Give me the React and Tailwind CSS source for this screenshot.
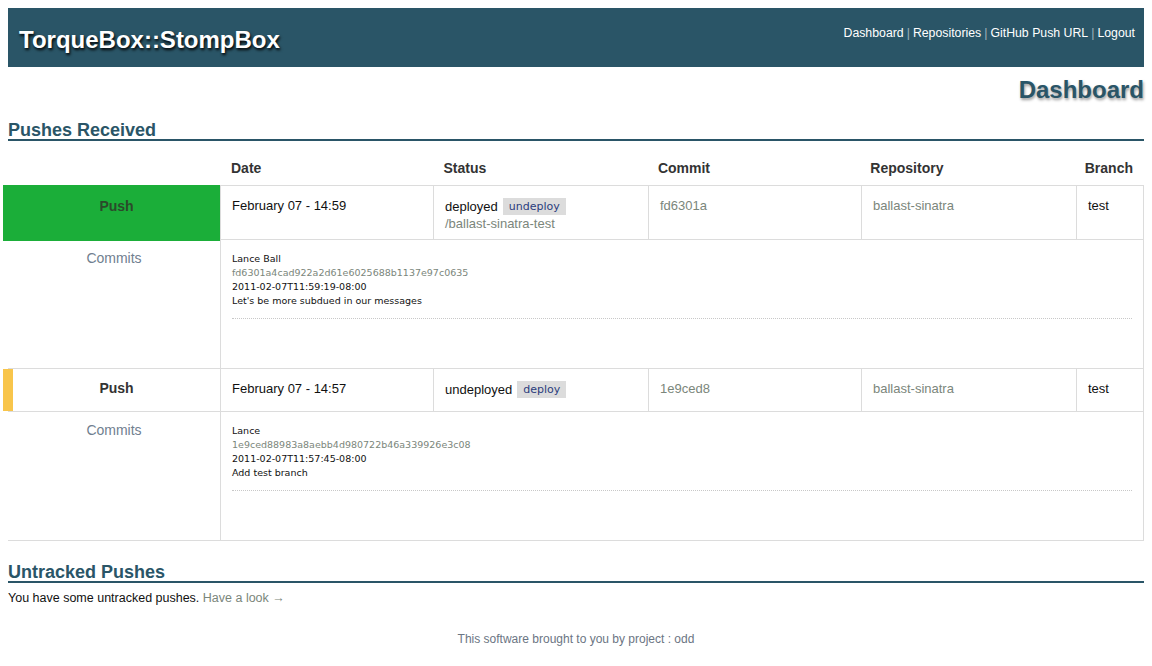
import React from 'react';

const BLUE = '#2a5567';
const LINK = 'text-[#7b867b]';

const pushes = [
  {
    id: 1,
    color: 'green',
    date: 'February 07 - 14:59',
    status: 'deployed',
    action: 'undeploy',
    path: '/ballast-sinatra-test',
    commit: 'fd6301a',
    repo: 'ballast-sinatra',
    branch: 'test',
    author: 'Lance Ball',
    sha: 'fd6301a4cad922a2d61e6025688b1137e97c0635',
    time: '2011-02-07T11:59:19-08:00',
    message: "Let's be more subdued in our messages",
  },
  {
    id: 2,
    color: 'yellow',
    date: 'February 07 - 14:57',
    status: 'undeployed',
    action: 'deploy',
    path: null,
    commit: '1e9ced8',
    repo: 'ballast-sinatra',
    branch: 'test',
    author: 'Lance',
    sha: '1e9ced88983a8aebb4d980722b46a339926e3c08',
    time: '2011-02-07T11:57:45-08:00',
    message: 'Add test branch',
  },
];

function SectionTitle({ children, className = '' }) {
  return (
    <h2
      className={`text-[18px] font-bold leading-[18px] border-b-2 ${className}`}
      style={{ color: BLUE, borderColor: BLUE }}
    >
      {children}
    </h2>
  );
}

function PushRows({ p, first }) {
  const green = p.color === 'green';
  const rowH = p.path ? 'h-[55px]' : 'h-[43px]';
  return (
    <>
      <div className={`flex ${rowH} border-b border-[#dcdcdc] ${first ? 'border-t' : ''}`}>
        <div
          className={`w-[217px] -ml-[5px] shrink-0 border-l-[10px] text-center text-[14px] leading-[17px] font-bold ${
            green
              ? 'bg-[#1bae39] border-[#1bae39] text-[#2b4a2b] -my-px h-[56px] pt-[13px]'
              : 'border-[#f8c54b] text-[#333] pt-[11px]'
          }`}
        >
          Push
        </div>
        <div className="w-[213px] border-l border-[#dcdcdc] px-[11px] pt-[11px] text-[13px] leading-[17px]">
          {p.date}
        </div>
        <div className="w-[215px] border-l border-[#dcdcdc] px-[11px] pt-[12px] text-[13px] leading-[17px]">
          <div className="flex items-center">
            <span>{p.status}</span>
            <span className="ml-[5px] bg-[#dcdcdc] px-[6px] pt-[2px] pb-[1px] text-[11px] leading-[14px] text-[#2b3c7c] [font-family:'DejaVu_Sans',sans-serif]">
              {p.action}
            </span>
          </div>
          {p.path && <div className={LINK}>{p.path}</div>}
        </div>
        <div className={`w-[213px] border-l border-[#dcdcdc] px-[11px] pt-[11px] text-[13px] leading-[17px] ${LINK}`}>
          {p.commit}
        </div>
        <div className={`w-[215px] border-l border-[#dcdcdc] px-[11px] pt-[11px] text-[13px] leading-[17px] ${LINK}`}>
          {p.repo}
        </div>
        <div className="flex-1 border-l border-r border-[#dcdcdc] px-[11px] pt-[11px] text-[13px] leading-[17px]">
          {p.branch}
        </div>
      </div>
      <div className="flex h-[129px] border-b border-[#dcdcdc]">
        <div className="w-[212px] shrink-0 text-center pt-[10px] text-[14px] leading-[17px] text-[#708090]">Commits</div>
        <div className="flex-1 border-l border-r border-[#dcdcdc] px-[11px] pt-[12px]">
          <div className="[font-family:'DejaVu_Sans',sans-serif] text-[9.5px] leading-[14px] text-[#111] pb-[10px] border-b border-dotted border-[#c8c8c8]">
            <div>{p.author}</div>
            <div className={LINK}>{p.sha}</div>
            <div>{p.time}</div>
            <div>{p.message}</div>
          </div>
        </div>
      </div>
    </>
  );
}

export default function App() {
  const nav = ['Dashboard', 'Repositories', 'GitHub Push URL', 'Logout'];
  return (
    <div className="min-h-[666px] bg-white [font-family:'Liberation_Sans',Arial,sans-serif] text-[#111] px-2 pt-2">
      <header className="h-[59px] flex items-center justify-between pl-[11px] pr-[9px]" style={{ backgroundColor: BLUE }}>
        <h1 className="text-[24px] font-bold text-white mt-[5px] [text-shadow:1px_2px_3px_#000]">TorqueBox::StompBox</h1>
        <nav className="flex items-center text-[12.3px] text-white -mt-[8px]">
          {nav.map((n, i) => (
            <React.Fragment key={n}>
              {i > 0 && <span className="mx-[3px] text-[#9fb2bb]">|</span>}
              <span>{n}</span>
            </React.Fragment>
          ))}
        </nav>
      </header>

      <div className="text-right mt-[10px] h-[26px]">
        <span className="text-[24px] font-bold leading-[26px] [text-shadow:1px_2px_3px_#9a9a9a]" style={{ color: BLUE }}>
          Dashboard
        </span>
      </div>

      <SectionTitle className="mt-[18px]">Pushes Received</SectionTitle>

      <div className="mt-[14px]">
        <div className="flex h-[30px] pt-[3px] text-[14px] font-bold text-[#333] items-start">
          <div className="w-[212px] shrink-0" />
          <div className="w-[213px] px-[11px]">Date</div>
          <div className="w-[215px] px-[11px]">Status</div>
          <div className="w-[213px] px-[11px]">Commit</div>
          <div className="w-[215px] px-[11px]">Repository</div>
          <div className="flex-1 px-[11px]">Branch</div>
        </div>
        {pushes.map((p, i) => (
          <PushRows key={p.id} p={p} first={i === 0} />
        ))}
      </div>

      <SectionTitle className="mt-[22px]">Untracked Pushes</SectionTitle>
      <p className="text-[12.5px] mt-[6px]">
        You have some untracked pushes. <span className={LINK}>Have a look →</span>
      </p>

      <footer className="text-center text-[12px] text-[#6b7583] mt-[22px]">
        This software brought to you by project : odd
      </footer>
    </div>
  );
}
